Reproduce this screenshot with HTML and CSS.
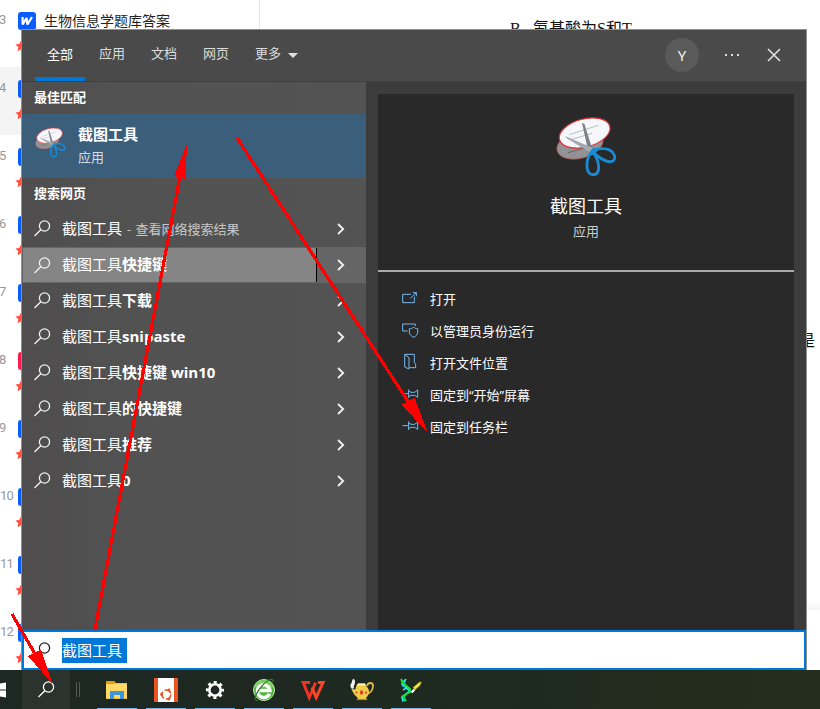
FILE: index.html
```html
<!DOCTYPE html>
<html lang="zh-CN">
<head>
<meta charset="utf-8">
<title>截图工具</title>
<link rel="stylesheet" href="styles.css">
</head>
<body>
<svg class="defs" width="0" height="0">
  <symbol id="mag" viewBox="0 0 17 17"><circle cx="10.5" cy="6" r="5.1" fill="none" stroke="currentColor" stroke-width="1.3"/><path d="M6.8 9.7L.5 16" fill="none" stroke="currentColor" stroke-width="1.3"/></symbol>
  <symbol id="chev" viewBox="0 0 8 12"><path d="M1 1l5.2 5L1 11" fill="none" stroke="currentColor" stroke-width="1.8"/></symbol>
  <symbol id="star" viewBox="0 0 12 12"><path d="M6 .5l1.7 3.6 3.9.5-2.9 2.7.8 3.9L6 9.3l-3.500 1.900.8-3.900L.4 4.600l3.900-.5z" fill="#ff5040"/></symbol>
  <symbol id="snip" viewBox="48 348 183 183">
    <ellipse cx="120" cy="434" rx="71" ry="41" transform="rotate(-15 120 434)" fill="#929294" stroke="#b9494c" stroke-width="2"/>
    <path d="M84 458l50-14" stroke="#666" stroke-width="3"/>
    <ellipse cx="134" cy="399" rx="78" ry="42" transform="rotate(-15 134 399)" fill="#f6f7fa" stroke="#e3343b" stroke-width="3.500"/>
    <path d="M88 404l87-28M96 418l60-18" stroke="#bbbcbf" stroke-width="3"/>
    <path d="M126 369l7 2 23 74-14-4z" fill="#7d8087"/>
    <path d="M75 408l84 36-5 16-72-44z" fill="#a4a9b3"/>
    <path d="M157 453c-20 20-24 71 2 71 27 0 18-45 0-67 15 12 35 31 54 28 23-5 9-38-22-39-13-1-24 1-34 7z" fill="none" stroke="#198bd2" stroke-width="8.500" stroke-linejoin="round"/>
    <path d="M147 458l12-15 15 3-10 22z" fill="#198bd2"/>
  </symbol>
  <symbol id="pin" viewBox="0 0 51 30"><path d="M1 15h19M20 2v26M20 7l7 4h11l9-7v22l-9-6H27l-7 4" fill="none" stroke="#76b9ed" stroke-width="3"/></symbol>
</svg>

<div class="page">
  <ol class="files">
    <li class="file"><span class="num">3</span><span class="doc"><svg viewBox="0 0 18 18"><path d="M4.600 5v7.500L8.600 6l.8 6.500L14 5" fill="none" stroke="#fff" stroke-width="2.200" stroke-linejoin="bevel"/></svg></span><span class="name">生物信息学题库答案</span><svg class="star"><use href="#star"/></svg></li>
    <li class="file active"><span class="num">4</span><span class="doc"></span><svg class="star"><use href="#star"/></svg></li>
    <li class="file"><span class="num">5</span><span class="doc"></span><svg class="star"><use href="#star"/></svg></li>
    <li class="file"><span class="num">6</span><span class="doc"></span><svg class="star"><use href="#star"/></svg></li>
    <li class="file"><span class="num">7</span><span class="doc"></span><svg class="star"><use href="#star"/></svg></li>
    <li class="file"><span class="num">8</span><span class="doc pdf"></span><svg class="star"><use href="#star"/></svg></li>
    <li class="file"><span class="num">9</span><span class="doc"></span><svg class="star"><use href="#star"/></svg></li>
    <li class="file two"><span class="num">10</span><span class="doc"></span><svg class="star"><use href="#star"/></svg></li>
    <li class="file two"><span class="num">11</span><span class="doc"></span><svg class="star"><use href="#star"/></svg></li>
    <li class="file two"><span class="num">12</span><span class="doc"></span><svg class="star"><use href="#star"/></svg></li>
  </ol>
  <div class="paper">
    <p class="line"><span class="opt">B</span>氨基酸为S和T</p>
    <p class="tail">是</p>
    <div class="edge"></div>
  </div>
</div>

<footer class="taskbar">
  <svg class="win" viewBox="0 0 6 16"><path d="M0 1.500L6 .5v7H0zM0 8.500h6v7l-6-1z" fill="#fff"/></svg>
  <span class="tb-search"><svg><use href="#mag"/></svg></span>
  <span class="grip"></span>
  <div class="apps">
    <span class="app"><svg viewBox="0 0 24 24"><path d="M1 3h8l2 2h11v16H1z" fill="#f5c13c"/><path d="M1 6h21v14H1z" fill="#ffd867"/><path d="M1 3h8l1 3H1z" fill="#dfa000"/><path d="M5 21v-8h14v8h-4v-4H9v4z" fill="#3c96dc"/></svg></span>
    <span class="app"><svg viewBox="0 0 24 24"><path d="M0 0h24v24H0z" fill="#fff"/><path d="M0 0h4v24H0zM20 0h4v24h-4z" fill="#e95420"/><circle cx="12.300" cy="16.500" r="4.500" fill="none" stroke="#e95420" stroke-width="1.600" stroke-dasharray="7.400 2"/><circle cx="7.500" cy="16.500" r="1.400" fill="#e95420"/><circle cx="15" cy="12" r="1.400" fill="#e95420"/><circle cx="15" cy="21" r="1.400" fill="#e95420"/></svg></span>
    <span class="app"><svg viewBox="0 0 24 24"><circle cx="12" cy="12" r="5.700" fill="none" stroke="#fff" stroke-width="2.600"/><circle cx="12" cy="12" r="7.800" fill="none" stroke="#fff" stroke-width="2.600" stroke-dasharray="3.063 3.063" stroke-dashoffset="1.530"/></svg></span>
    <span class="app"><svg viewBox="0 0 24 24"><circle cx="12" cy="12" r="10.500" fill="#4fb63a" stroke="#bfe8ae" stroke-width="1"/><path d="M2.500 9.500a10 10 0 0 1 19 0z" fill="#7ed263"/><path d="M17.500 15.800a6.300 6.300 0 1 1 .5-3.300H7" fill="none" stroke="#fff" stroke-width="3.400"/><path d="M6 22C1 24 3 16 10 8S22 0 21 4" fill="none" stroke="#27831f" stroke-width="1.200"/></svg></span>
    <span class="app"><svg viewBox="0 0 24 24"><path d="M9 4.500H2.200l6.100 15L14.600 4.500" fill="none" stroke="#f33323" stroke-width="3"/><path d="M11 9.500l4.200 10L22 4.500h-5" fill="none" stroke="#ff4528" stroke-width="3"/></svg></span>
    <span class="app"><svg viewBox="0 0 24 24"><path d="M17 8c1-4 6-4 6 0s-3 8-7 8" fill="none" stroke="#e0b84a" stroke-width="1.800"/><path d="M8 5.500h7l1 2.500c5 4 3 9 0 12l1.500 2H6.500l1.500-2c-3-2-5-5-6.500-9l4 .5c0-3 1-4 2.500-6z" fill="#f1ce49"/><path d="M2 11C-1 8 1 6 2 4c0-4 3-4 3 0 0 3-2 4-1 6z" fill="#f4f4f4"/><path d="M8 5.500h7l1 2H7z" fill="#fff1a0"/><ellipse cx="11.500" cy="14.500" rx="1.600" ry="2.300" fill="#df3c24"/><circle cx="6.500" cy="14.500" r="1.100" fill="#df3c24"/><circle cx="16" cy="14.500" r="1.100" fill="#df3c24"/><path d="M7 21.500h10" stroke="#b58c24" stroke-width="1.200"/></svg></span>
    <span class="app"><svg viewBox="0 0 24 24"><path d="M2.500 3l4 1M3 8l4-2M4 12l5-3M3 20l4-3M3 23l4-1" stroke="#28d9ed" stroke-width="1.500"/><path d="M7 1L3 6l8 7-8 6 1 4" fill="none" stroke="#28e8f0" stroke-width="1.800"/><path d="M2 1l2 4 7 6v3l-7 4 3 5" fill="none" stroke="#18e030" stroke-width="2"/><path d="M12.500 14.500l3-3" stroke="#fff" stroke-width="2.400"/><path d="M14 9.500L20.500 4h2L21 7.500l-5 4.500z" fill="#f1e734" stroke="#8a7a20" stroke-width=".6"/></svg></span>
  </div>
</footer>

<main class="panel">
  <header class="top">
    <nav class="tabs">
      <span class="tab on">全部</span><span class="tab">应用</span><span class="tab">文档</span><span class="tab">网页</span><span class="tab">更多<i class="caret"></i></span>
    </nav>
    <div class="tools">
      <span class="avatar">Y</span>
      <span class="dots"><i></i><i></i><i></i></span>
      <svg class="close" viewBox="0 0 14 14"><path d="M1 1l12 12M13 1L1 13" stroke="#e6e6e6" stroke-width="1.500"/></svg>
    </div>
  </header>
  <div class="cols">
    <section class="results">
      <h2>最佳匹配</h2>
      <div class="best">
        <svg><use href="#snip"/></svg>
        <div><b>截图工具</b><small>应用</small></div>
      </div>
      <h2 class="web">搜索网页</h2>
      <ul class="list">
        <li><svg class="m"><use href="#mag"/></svg><span class="q">截图工具 <small>- 查看网络搜索结果</small></span><svg class="c"><use href="#chev"/></svg></li>
        <li class="hover"><div class="main"><svg class="m"><use href="#mag"/></svg><span class="q">截图工具<b>快捷键</b></span></div><svg class="c"><use href="#chev"/></svg></li>
        <li><svg class="m"><use href="#mag"/></svg><span class="q">截图工具<b>下载</b></span><svg class="c"><use href="#chev"/></svg></li>
        <li><svg class="m"><use href="#mag"/></svg><span class="q">截图工具<b>snipaste</b></span><svg class="c"><use href="#chev"/></svg></li>
        <li><svg class="m"><use href="#mag"/></svg><span class="q">截图工具<b>快捷键 win10</b></span><svg class="c"><use href="#chev"/></svg></li>
        <li><svg class="m"><use href="#mag"/></svg><span class="q">截图工具<b>的快捷键</b></span><svg class="c"><use href="#chev"/></svg></li>
        <li><svg class="m"><use href="#mag"/></svg><span class="q">截图工具<b>推荐</b></span><svg class="c"><use href="#chev"/></svg></li>
        <li><svg class="m"><use href="#mag"/></svg><span class="q">截图工具<b>0</b></span><svg class="c"><use href="#chev"/></svg></li>
      </ul>
    </section>
    <section class="detail">
      <div class="card">
        <div class="hero">
          <svg><use href="#snip"/></svg>
          <h1>截图工具</h1>
          <p>应用</p>
        </div>
        <ul class="actions">
          <li><svg viewBox="66 109 51 51"><path d="M93 119H68v25h35v-18M91 131l18-17M98 114h11v11" /></svg><span>打开</span></li>
          <li><svg viewBox="66 205 51 51"><path d="M83 229H68v-21h38v6M101 217c-4 4-8 5-13 5v10c0 7 5 12 13 16 8-4 12-9 12-16v-10c-5 0-9-1-12-5z"/></svg><span>以管理员身份运行</span></li>
          <li><svg viewBox="66 301 51 51"><path d="M75 299h28v25l4 4v11H88M74 299l13 10v34l-13-6z"/></svg><span>打开文件位置</span></li>
          <li><svg viewBox="0 -5 51 51"><use href="#pin" width="51" height="30"/></svg><span>固定到“开始”屏幕</span></li>
          <li><svg viewBox="0 -5 51 51"><use href="#pin" width="51" height="30"/></svg><span>固定到任务栏</span></li>
        </ul>
      </div>
    </section>
  </div>
  <div class="searchbox"><svg><use href="#mag"/></svg><span class="sel">截图工具</span></div>
</main>

<svg class="arrows" viewBox="0 0 820 709">
  <path d="M95 629L180 176M237 138L409 403M12 614L35 654" stroke="#f00" stroke-width="3.200" fill="none"/>
  <path d="M187 144L174 176l11.500 3zM427.500 432L401.500 405l13-7.500zM52.500 684L28 656l13-6.500z" fill="#f00"/>
</svg>
</body>
</html>
```
FILE: styles.css
```css
* { box-sizing: border-box; }
body {
  margin: 0;
  width: 820px;
  height: 709px;
  display: flex;
  flex-direction: column;
  position: relative;
  overflow: hidden;
  background: #fff;
  font-family: "Open Sans", "Noto Sans CJK SC", sans-serif;
}
h1, h2, p, ul, ol { margin: 0; padding: 0; font-weight: normal; }
ul, ol { list-style: none; }
.defs { position: absolute; }

.page { display: flex; height: 670px; overflow: hidden; }
.files { width: 260px; margin-top: -1px; border-right: 1px solid #e4e4e4; }
.file {
  height: 68px;
  display: grid;
  grid-template-columns: 13px 18px 1fr;
  grid-template-rows: 18px 12px;
  column-gap: 5px;
  row-gap: 10px;
  padding-top: 13px;
}
.file.active { background: #f4f4f4; }
.num { color: #999; font: 13px/15px Roboto, sans-serif; text-indent: -1px; }
.two .num { letter-spacing: -.8px; text-indent: 0; line-height: 16px; }
.doc { height: 18px; border-radius: 3px; background: #0a5cff; }
.doc svg { display: block; }
.doc.pdf { background: #ff1a4d; }
.name { padding-left: 3px; font-size: 14px; line-height: 17px; color: #222; }
.star { grid-row: 2; grid-column: 1 / 3; width: 12px; height: 12px; margin-left: 15px; }
.paper { flex: 1; font-family: "Liberation Serif", "Noto Sans CJK SC", serif; font-size: 16px; color: #111; }
.line { padding: 17px 0 0 250px; line-height: 24px; }
.opt { display: inline-block; width: 23px; }
.tail { margin-top: 288px; padding-left: 539px; line-height: 24px; }
.edge { height: 10px; margin: 247px 0 0 547px; background: linear-gradient(#fff, #f4f4f4); }

.taskbar {
  height: 39px;
  display: flex;
  align-items: stretch;
  background: linear-gradient(90deg, #1d2723, #1f2a20 60%, #232e1c);
}
.win { width: 6px; height: 16px; margin: 12px 16px 0 0; }
.tb-search { width: 48px; background: #2b332f; color: #fff; padding: 11px 0 0 16px; }
.tb-search svg { width: 17px; height: 17px; display: block; }
.grip { width: 4px; height: 15px; margin: 12px 17px 0 6px; border: solid #545b57; border-width: 0 1px; }
.apps { display: flex; gap: 9px; }
.app { width: 40px; padding: 8px 0 0 8px; border-bottom: 1px solid #76b9ed; }
.app svg { width: 24px; height: 24px; display: block; }

.panel {
  position: absolute;
  left: 21px;
  top: 29px;
  width: 786px;
  height: 641px;
  border: 1px solid #8f9090;
  border-bottom: 0;
  display: flex;
  flex-direction: column;
  color: #fff;
  background: #3c3c3c;
}
.top {
  height: 52px;
  display: flex;
  justify-content: space-between;
  border-bottom: 1px solid #404040;
  background: #4a4a4a;
}
.tabs { display: flex; gap: 2px; padding-left: 13px; }
.tab { width: 50px; padding-left: 12px; font-size: 13px; line-height: 46px; color: #dcdcdc; white-space: nowrap; }
.tab.on { color: #fff; line-height: 48px; height: 51px; border-bottom: 4px solid #0078d7; }
.caret { display: inline-block; margin-left: 7px; border: 5px solid transparent; border-top-color: #e0e0e0; border-bottom: 0; vertical-align: 0; }
.tools { display: flex; align-items: center; padding: 0 25px 2px 0; }
.avatar { width: 34px; height: 34px; border-radius: 50%; background: #5a5a5a; text-align: center; font-size: 15px; line-height: 34px; }
.dots { display: flex; gap: 4px; margin: 0 28px 0 26px; }
.dots i { width: 2px; height: 2px; background: #ddd; }
.close { width: 14px; height: 14px; }

.cols { height: 548px; display: flex; }
.results { width: 344px; background: linear-gradient(90deg, #4f4d4d, #525252 30%, #535353); }
h2 { height: 32px; padding-left: 12px; font-size: 13px; line-height: 30px; font-weight: bold; }
h2.web { height: 33px; }
.best { height: 64px; display: flex; padding: 13px 0 0 13px; background: #3b5e7b; }
.best svg { width: 31px; height: 31px; }
.best div { display: flex; flex-direction: column; margin: -5px 0 0 12px; }
.best b { font-size: 15px; line-height: 24px; }
.best small { font-size: 13px; line-height: 23px; color: #d5dde4; }
.list li { height: 36px; display: flex; align-items: center; padding: 0 21px 1px 12px; }
.list svg { flex: none; color: #f2f2f2; }
.list .m { width: 17px; height: 17px; }
.list .c { width: 8px; height: 12px; margin-left: auto; }
.q { height: 34px; margin-left: 11px; font-size: 15px; line-height: 32px; white-space: nowrap; }
.q small { font-size: 13px; color: #c8c8c8; margin-left: 1px; word-spacing: 1px; }
.list .hover { background: #656565; padding: 1px 21px 1px 1px; }
.main { display: flex; align-items: center; width: 294px; height: 34px; padding-left: 11px; background: #858585; border-right: 1px solid #000; }

.detail { flex: 1; padding: 12px 12px 0; }
.card { height: 536px; background: #292929; }
.hero { height: 178px; padding-top: 22px; border-bottom: 2px solid #aca7aa; display: flex; flex-direction: column; align-items: center; }
.hero svg { width: 61px; height: 61px; }
h1 { margin-top: 15px; font-size: 18px; line-height: 28px; }
.hero p { font-size: 13px; line-height: 22px; color: #ccc; }
.actions { padding: 11px 0 0 24px; }
.actions li { height: 32px; display: flex; align-items: center; gap: 11px; font-size: 13px; line-height: 32px; white-space: nowrap; }
.actions span { height: 32px; }
.actions svg { width: 17px; height: 17px; overflow: visible; fill: none; stroke: #76b9ed; stroke-width: 3; }

.searchbox { height: 40px; display: flex; align-items: center; padding-left: 10px; border: 2px solid #0078d7; background: #fff; color: #222; }
.searchbox svg { width: 17px; height: 17px; }
.sel { width: 65px; height: 25px; margin-left: 11px; background: #0078d7; color: #fff; font-size: 15px; line-height: 24px; }
.arrows { position: absolute; left: 0; top: 0; width: 820px; height: 709px; shape-rendering: crispEdges; }
```
